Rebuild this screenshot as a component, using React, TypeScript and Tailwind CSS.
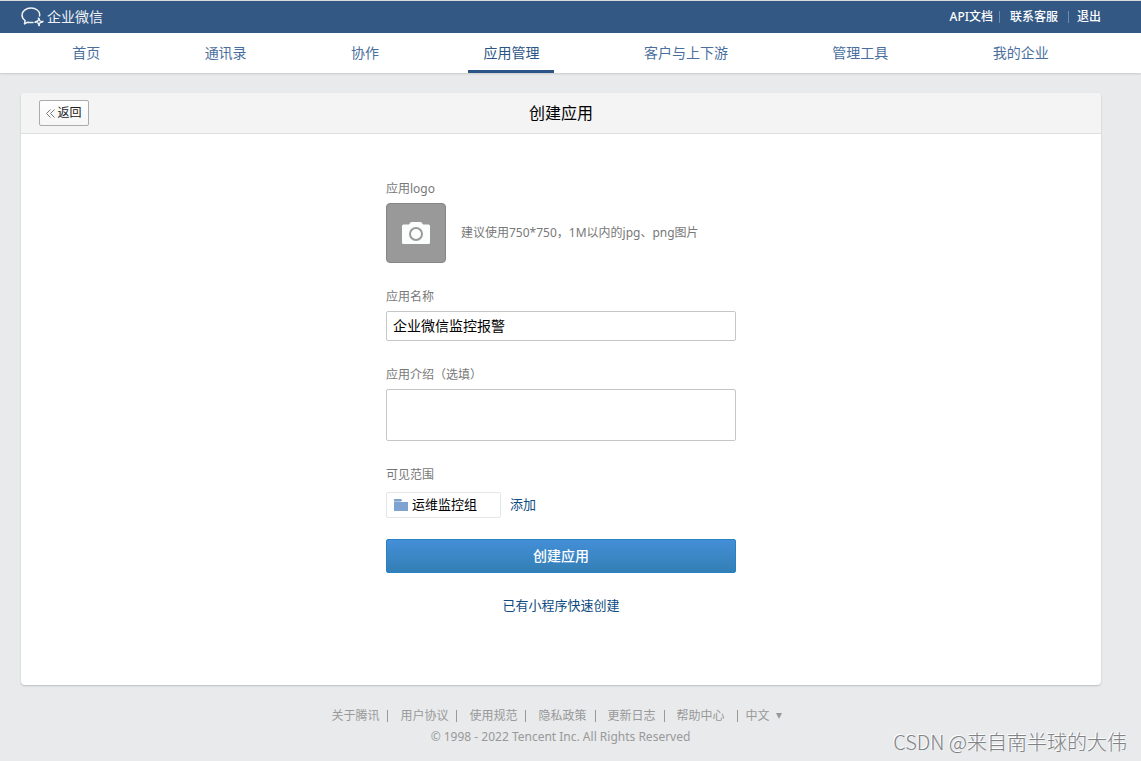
import { useState } from "react";

const navItems = ["首页", "通讯录", "协作", "应用管理", "客户与上下游", "管理工具", "我的企业"];
const footerLinks = ["关于腾讯", "用户协议", "使用规范", "隐私政策", "更新日志", "帮助中心"];

function Logo() {
  return (
    <a href="#" className="flex items-center gap-[3px] text-[#eef2f7]">
      <svg width="23" height="20" viewBox="0 0 23 20" fill="none" stroke="currentColor" className="shrink-0">
        <path
          d="M18.500 8.900c.2-.5.200-.9.200-1.400C18.700 4 15 1.100 10 1.100S1 4.200 1 8c0 2.300 1.200 4.200 3.100 5.500L3.500 16.900l3.300-1.700c1 .3 2.100.4 3.200.4.700 0 1.400-.1 2-.2"
          strokeWidth="1.5"
          strokeLinejoin="round"
          strokeLinecap="round"
        />
        <path
          d="M17.600 11.400l.7 1.900M21.700 14.600l-2.300.8M18.200 18.300l-.7-1.900M14.300 15.100l2-.8"
          strokeWidth="1.9"
          strokeLinecap="round"
        />
        <path d="M17.900 12.300l2.500 2.600-2.500 2.300-2.500-2.300z" strokeWidth="1" strokeLinejoin="round" />
      </svg>
      <span className="text-sm leading-5">企业微信</span>
    </a>
  );
}

function TopBar() {
  return (
    <header className="border-t border-[#d8dadb] bg-[#335883]">
      <div className="ml-[21px] mr-10 flex h-8 items-center justify-between">
        <Logo />
        <div className="flex items-center text-xs font-medium text-white">
          <a href="#">API文档</a>
          <span className="ml-1.5 mr-2.5 h-3 w-px bg-[#6d8bae]" />
          <a href="#">联系客服</a>
          <span className="ml-2.5 mr-2 h-3 w-px bg-[#6d8bae]" />
          <a href="#">退出</a>
        </div>
      </div>
    </header>
  );
}

function Nav() {
  return (
    <nav className="bg-white shadow-[0_1px_2px_rgba(0,0,0,0.15)]">
      <div className="ml-5 mr-10 flex h-10 justify-around">
        {navItems.map((item) => (
          <a
            key={item}
            href="#"
            className={`flex items-center border-b-3 px-[15px] pt-[3px] text-sm ${
              item === "应用管理" ? "border-[#2b5586] text-[#2b5586]" : "border-transparent text-[#4a6f9d]"
            }`}
          >
            {item}
          </a>
        ))}
      </div>
    </nav>
  );
}

function CreateForm() {
  const [name, setName] = useState("企业微信监控报警");
  const [intro, setIntro] = useState("");

  return (
    <form className="mx-auto flex w-[350px] flex-col pb-[70px] pt-[45px]" onSubmit={(e) => e.preventDefault()}>
      <label htmlFor="logo" className="text-xs leading-5 text-[#787878]">应用logo</label>
      <div className="mt-1 flex items-center gap-[15px]">
        <button
          id="logo"
          type="button"
          aria-label="应用logo"
          className="flex size-[60px] items-center justify-center rounded border border-[#858585] bg-[#999]"
        >
          <svg width="28" height="22" viewBox="0 0 28 22">
            <path
              d="M7 2.500L8.200.8Q8.700 0 9.700 0h8.600q1 0 1.500.8L21 2.500h5.500Q28 2.500 28 4v16.500q0 1.500-1.500 1.500h-25Q0 22 0 20.500V4q0-1.500 1.500-1.500z"
              fill="#fcfdfd"
            />
            <circle cx="14" cy="12" r="6" fill="none" stroke="#999" strokeWidth="2" />
          </svg>
        </button>
        <p className="text-xs text-[#787878]">建议使用750*750，1M以内的jpg、png图片</p>
      </div>

      <label htmlFor="name" className="mt-6 text-xs leading-5 text-[#787878]">应用名称</label>
      <input
        id="name"
        value={name}
        onChange={(e) => setName(e.target.value)}
        className="mt-1 h-[30px] rounded-xs border border-[#c4c6c8] px-1.5 pb-0.5 text-sm text-black"
      />

      <label htmlFor="intro" className="mt-6 text-xs leading-5 text-[#787878]">应用介绍（选填）</label>
      <textarea
        id="intro"
        value={intro}
        onChange={(e) => setIntro(e.target.value)}
        className="mt-1 h-[52px] resize-none rounded-xs border border-[#c4c6c8] px-1.5 py-1 text-sm"
      />

      <div className="mt-6 text-xs leading-5 text-[#787878]">可见范围</div>
      <div className="mt-[7px] flex items-center gap-[9px] text-[13px]">
        <div className="flex h-[26px] w-[115px] items-center gap-1 rounded-xs border border-[#e4e6e9] px-[7px] text-black">
          <svg width="14" height="12" viewBox="0 0 14 12" fill="#7ea3d1">
            <path d="M0 0h7l1 1v1H0zM0 3h14v9H0z" />
            <path d="M0 1h7v2H0z" opacity=".6" />
          </svg>
          运维监控组
        </div>
        <button type="button" className="text-[#0d4b80]">添加</button>
      </div>

      <button
        type="submit"
        className="mt-[21px] h-[34px] rounded-xs border border-[#2482c5] bg-linear-to-b from-[#448fd7] to-[#337fb5] text-sm font-medium text-white"
      >
        创建应用
      </button>
      <a href="#" className="mt-[22px] self-center text-[13px] leading-5 text-[#0d4b80]">已有小程序快速创建</a>
    </form>
  );
}

function Footer() {
  return (
    <footer className="ml-5 mr-10 mt-5 text-center text-xs leading-[21px] text-[#999]">
      <div className="flex items-center justify-center pr-2">
        {footerLinks.map((link) => (
          <div key={link} className="flex items-center">
            <a href="#">{link}</a>
            <span className={link === "帮助中心" ? "ml-3 mr-2 h-3 w-px bg-[#999]" : "ml-2 mr-3 h-3 w-px bg-[#999]"} />
          </div>
        ))}
        <button type="button" className="flex items-center gap-1.5">
          中文
          <span className="border-x-[3px] border-t-[6px] border-x-transparent border-t-[#999]" />
        </button>
      </div>
      <p>© 1998 - 2022 Tencent Inc. All Rights Reserved</p>
    </footer>
  );
}

export default function App() {
  return (
    <div className="relative min-h-screen bg-[#e8eaec] font-['Noto_Sans','Noto_Sans_CJK_SC',sans-serif]">
      <TopBar />
      <Nav />
      <main className="ml-[21px] mr-10 mt-5 rounded bg-white shadow-[0_1px_2px_rgba(0,0,0,0.2)]">
        <div className="grid h-[41px] grid-cols-[1fr_auto_1fr] items-center rounded-t border-b border-[#dedfe0] bg-[#f4f4f4] px-[18px]">
          <button
            type="button"
            className="flex h-[26px] w-[50px] items-center justify-center gap-0.5 rounded-xs border border-[#a9abad] bg-linear-to-b from-white to-[#f6f6f6] text-xs text-[#222]"
          >
            <svg width="9" height="9" viewBox="0 0 9 9" fill="none" stroke="#777">
              <path d="M4.500.5l-4 4 4 4M8.500.5l-4 4 4 4" />
            </svg>
            返回
          </button>
          <h1 className="text-base text-black">创建应用</h1>
        </div>
        <CreateForm />
      </main>
      <Footer />
      <div className="pointer-events-none absolute bottom-[5px] right-3.5 font-['Noto_Sans_CJK_SC',sans-serif] text-xl font-light text-[#808284] [text-shadow:-1px_-1px_0_#fff]">
        CSDN @来自南半球的大伟
      </div>
    </div>
  );
}
